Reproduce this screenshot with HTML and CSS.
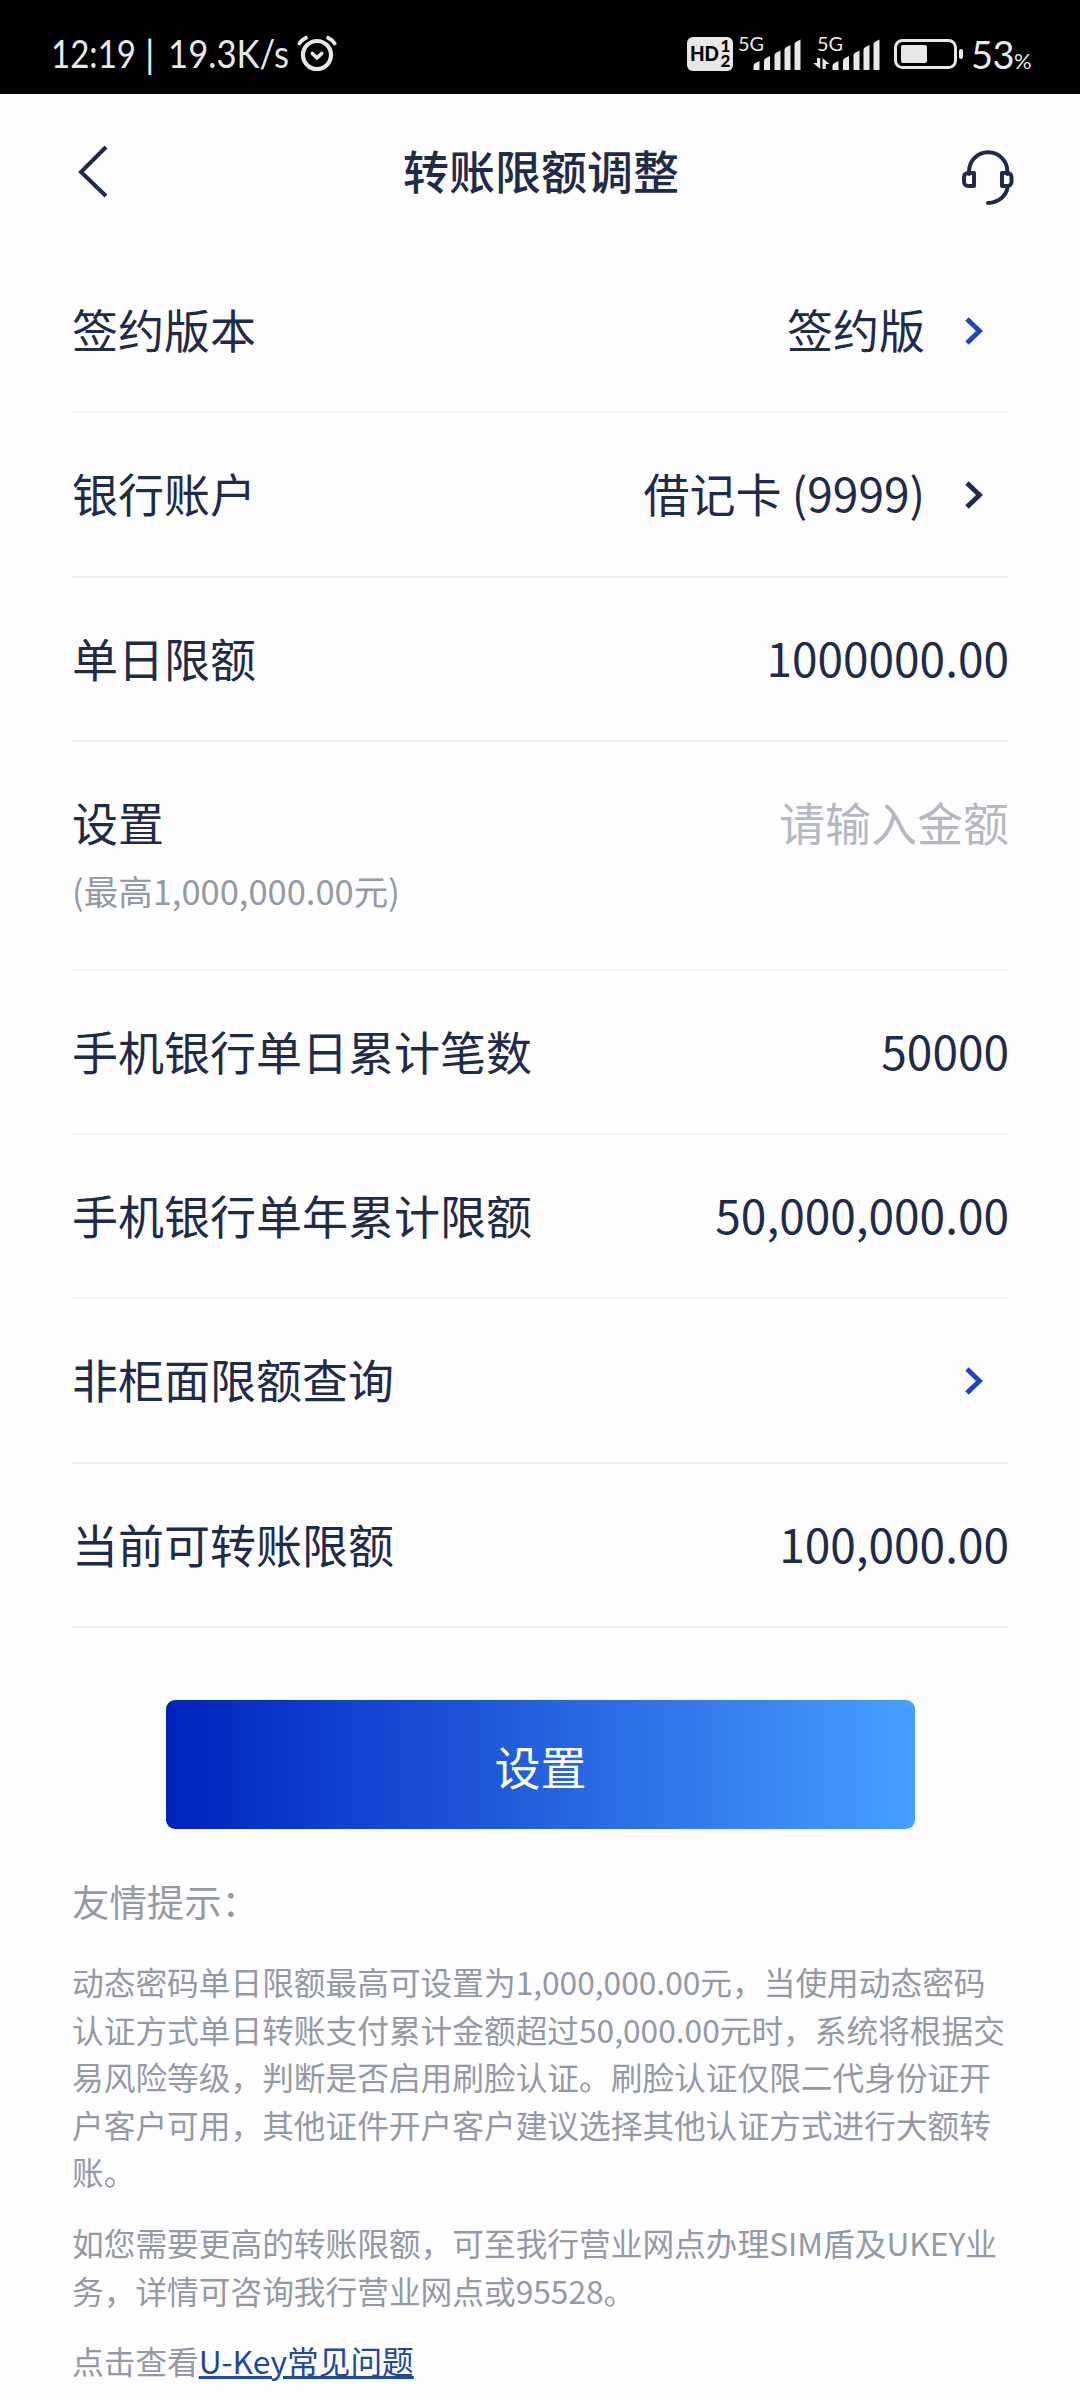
FILE: index.html
```html
<!DOCTYPE html>
<html lang="zh-CN">
<head>
<meta charset="utf-8">
<title>转账限额调整</title>
<link rel="stylesheet" href="styles.css">
</head>
<body>
<header class="status">
  <svg class="clock" width="239" height="46" viewBox="0 0 239 46" fill="#e8e8e8">
    <text x="0" y="34" textLength="85" lengthAdjust="spacingAndGlyphs">12:19</text>
    <text x="94" y="34">|</text>
    <text x="117" y="34" textLength="121" lengthAdjust="spacingAndGlyphs">19.3K/s</text>
  </svg>
  <svg class="alarm" width="40" height="38" viewBox="0 0 40 38" fill="none" stroke="#e8e8e8" stroke-linecap="round" stroke-linejoin="round">
    <circle cx="20" cy="21" r="14" stroke-width="4.200"/>
    <path d="M15.3 19.5l4.7 4.3 4.7-4.3" stroke-width="3.6"/>
    <path d="M2.300 9.500Q5 5.800 9 3.800M37.700 9.500Q35 5.800 31 3.800" stroke-width="3.800"/>
  </svg>
  <svg class="signals" width="194" height="40" viewBox="0 0 194 40" fill="#e8e8e8">
    <rect x="0" y="3" width="46" height="34" rx="6"/>
    <text class="hd" x="3" y="27" textLength="29" lengthAdjust="spacingAndGlyphs">HD</text>
    <text class="sim" x="33.500" y="18">1</text>
    <text class="sim" x="33.500" y="33">2</text>
    <text class="net" x="51" y="17" textLength="26" lengthAdjust="spacingAndGlyphs">5G</text>
    <path d="M66.500 36v-4q0-2 2-3l4-2v9zM77 36v-9q0-2 2-3l4-2v14zM87.500 36v-14.500q0-2 2-3l4-2v19.500zM97.500 36v-20q0-2 2-3l4-2v25zM107.500 36v-25.500q0-2 2-3l4-2v30.500z"/>
    <text class="net" x="130" y="17" textLength="26" lengthAdjust="spacingAndGlyphs">5G</text>
    <path d="M145.500 36v-4q0-2 2-3l4-2v9zM156 36v-9q0-2 2-3l4-2v14zM166.500 36v-14.500q0-2 2-3l4-2v19.500zM176.500 36v-20q0-2 2-3l4-2v25zM186.500 36v-25.500q0-2 2-3l4-2v30.500z"/>
    <path d="M130 24h3.200v11l-7-6h3.800zM135.500 35h3.200v-5h3.800l-7-6z"/>
  </svg>
  <svg class="battery" width="70" height="30" viewBox="0 0 70 30">
    <rect x="1.500" y="1.500" width="60" height="27" rx="7" fill="none" stroke="#e8e8e8" stroke-width="3"/>
    <rect x="7" y="6" width="26" height="18" rx="2" fill="#e8e8e8"/>
    <rect x="65" y="10" width="4" height="10" rx="2" fill="#e8e8e8"/>
  </svg>
  <span class="level">53<small class="pct">%</small></span>
</header>
<nav class="navbar">
  <svg class="back" width="30" height="54" viewBox="0 0 30 54" fill="none" stroke="#1f2b48" stroke-width="4"><path d="M28 2L3 27l25 24"/></svg>
  <h1 class="title">转账限额调整</h1>
  <svg class="service" width="52" height="56" viewBox="0 0 52 56" fill="none" stroke="#1f2b48" stroke-width="4" stroke-linejoin="round" stroke-linecap="round">
    <path d="M7 24v-2.500a19.200 19.200 0 0 1 38.400 0v2.500"/>
    <path d="M45.500 37c-1 9-9 15.500-19.500 16"/>
    <path d="M12 23v13H6a4 4 0 0 1-4-4v-5a4 4 0 0 1 4-4zM40 23v13h5.500a4 4 0 0 0 4-4v-5a4 4 0 0 0-4-4z"/>
  </svg>
</nav>
<main class="content">
  <section class="row"><span>签约版本</span><span class="value">签约版</span><svg class="arrow blue" width="18" height="28" viewBox="0 0 18 28"><path d="M2 2l12.500 12L2 26"/></svg></section>
  <section class="row"><span>银行账户</span><span class="value">借记卡 (9999)</span><svg class="arrow" width="18" height="28" viewBox="0 0 18 28"><path d="M2 2l12.500 12L2 26"/></svg></section>
  <section class="row"><span>单日限额</span><span class="value">1000000.00</span></section>
  <section class="row tall"><div><span>设置</span><p class="max">(最高1,000,000.00元)</p></div><span class="value placeholder">请输入金额</span></section>
  <section class="row"><span>手机银行单日累计笔数</span><span class="value">50000</span></section>
  <section class="row"><span>手机银行单年累计限额</span><span class="value">50,000,000.00</span></section>
  <section class="row"><span>非柜面限额查询</span><svg class="arrow blue alone" width="18" height="28" viewBox="0 0 18 28"><path d="M2 2l12.500 12L2 26"/></svg></section>
  <section class="row"><span>当前可转账限额</span><span class="value">100,000.00</span></section>
  <button class="submit">设置</button>
  <section class="tips">
    <h2 class="tips-title">友情提示：</h2>
    <p>动态密码单日限额最高可设置为1,000,000.00元，当使用动态密码<br>认证方式单日转账支付累计金额超过50,000.00元时，系统将根据交<br>易风险等级，判断是否启用刷脸认证。刷脸认证仅限二代身份证开<br>户客户可用，其他证件开户客户建议选择其他认证方式进行大额转<br>账。</p>
    <p>如您需要更高的转账限额，可至我行营业网点办理SIM盾及UKEY业<br>务，详情可咨询我行营业网点或95528。</p>
    <p>点击查看<a class="link" href="#">U-Key常见问题</a></p>
  </section>
</main>
</body>
</html>
```
FILE: styles.css
```css
* { box-sizing: border-box; }
body {
  margin: 0;
  height: 2400px;
  overflow: hidden;
  background: #fefefe;
  color: #1f2b48;
  font-family: "Noto Sans CJK SC", sans-serif;
}
.status {
  height: 94px;
  background: #000;
  color: #e8e8e8;
  display: flex;
  align-items: flex-start;
  padding: 34px 50px 0 51px;
  font-family: Lato, sans-serif;
}
.status svg { flex: none; overflow: visible; }
.clock { font-size: 38px; }
.alarm { margin-left: 7px; }
.signals { margin-left: 350px; }
.hd { font: 900 21px Lato, sans-serif; fill: #000; }
.sim { font: 900 17px Lato, sans-serif; fill: #000; }
.net { font: 20px Lato, sans-serif; }
.battery { margin: 5px 0 0 13px; }
.level { margin: -1px 0 0 7px; font-size: 38px; line-height: 42px; white-space: nowrap; letter-spacing: -0.6px; }
.pct { font-size: 22px; }
.navbar { height: 155px; display: flex; padding: 0 66px 0 78px; align-items: flex-start; }
.back { margin-top: 51px; }
.title { flex: 1; margin: 40px 0 0 12px; text-align: center; font-size: 46px; line-height: 70px; font-weight: 500; }
.service { margin-top: 56px; }
.content { padding: 0 71px 0 72px; }
.row {
  height: 164.300px;
  display: flex;
  align-items: flex-start;
  padding-top: 45px;
  border-bottom: 2px solid #f0f1f3;
  font-size: 46px;
  line-height: 68px;
  white-space: nowrap;
}
.tall { height: 229px; }
.value { margin-left: auto; }
.placeholder { color: #b5b8c2; }
.max { margin: 10px 0 0; font-size: 34.500px; line-height: 50px; color: #9499a5; }
.arrow { margin: 23px 26px 0 40px; fill: none; stroke: #1f2b48; stroke-width: 5; }
.blue { stroke: #1f47b5; }
.alone { margin-left: auto; }
.submit {
  display: block;
  width: 749px;
  height: 129px;
  margin: 72px auto 0 94px;
  padding: 0;
  border: 0;
  border-radius: 9px;
  background: linear-gradient(90deg, #0023be, #479fff);
  color: #fff;
  font: 46px "Noto Sans CJK SC", sans-serif;
}
.tips { color: #9499a5; font-size: 31.700px; line-height: 47.600px; white-space: nowrap; }
.tips p { margin: 0 0 23px; }
.tips-title { margin: 44px 0 29px; font-size: 37.400px; line-height: 56px; font-weight: 400; }
.link { color: #1f47a5; text-decoration-thickness: 3px; }
```
